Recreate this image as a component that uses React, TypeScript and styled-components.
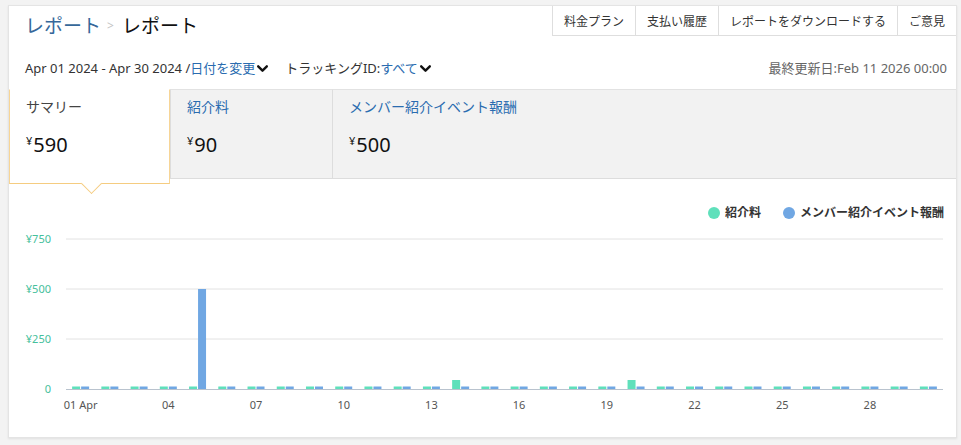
import React from 'react';
import styled, { createGlobalStyle } from 'styled-components';

const GlobalStyle = createGlobalStyle`
  html, body {
    margin: 0;
    background: #f3f3f3;
  }
  body {
    padding: 5px 4px 7px 8px;
    font-family: "Noto Sans", "Noto Sans CJK JP", sans-serif;
    color: #333;
  }
`;

const Card = styled.div`
  box-sizing: border-box;
  width: 949px;
  height: 433px;
  background: #fff;
  border: 1px solid #e4e4e4;
  box-shadow: 0 1px 2px rgba(0, 0, 0, 0.08);
  display: flex;
  flex-direction: column;
`;

const TopRow = styled.div`
  display: flex;
  justify-content: space-between;
  align-items: flex-start;
`;

const Breadcrumb = styled.div`
  display: flex;
  align-items: center;
  padding: 6px 0 0 16px;
  font-size: 19px;
  line-height: 28px;
`;

const CrumbLink = styled.span`
  color: #36689a;
`;

const CrumbSep = styled.span`
  color: #c4c4c4;
  font-size: 12px;
  margin: 0 8px 0 6px;
`;

const CrumbCurrent = styled.span`
  color: #111;
`;

const ButtonGroup = styled.div`
  display: flex;
  height: 30px;
`;

const TopButton = styled.div`
  display: flex;
  align-items: center;
  padding: 0 11px;
  font-size: 12px;
  color: #333;
  border-left: 1px solid #dedede;
  border-bottom: 1px solid #dedede;
`;

const FilterRow = styled.div`
  display: flex;
  align-items: center;
  justify-content: space-between;
  padding: 18px 9px 0 16px;
  height: 20px;
  font-size: 13px;
  line-height: 20px;
`;

const FilterGroup = styled.div`
  display: flex;
  align-items: center;
`;

const FilterText = styled.span`
  color: #333;
`;

const FilterLink = styled.span`
  color: #2a6cb0;
`;

const Caret = styled.svg`
  width: 13px;
  height: 13px;
  margin: 1px 0 0 1px;
`;

const FilterSpacer = styled.span`
  width: 16px;
`;

const Updated = styled.span`
  color: #666;
`;

const TabRow = styled.div`
  display: flex;
  align-items: flex-start;
  height: 95px;
  margin-top: 11px;
`;

const Tab = styled.div<{ $active?: boolean; $width?: number }>`
  position: relative;
  box-sizing: border-box;
  ${p => (p.$width ? `width: ${p.$width}px;` : 'flex: 1;')}
  height: ${p => (p.$active ? 95 : 90)}px;
  padding: 7px 16px 0;
  background: ${p => (p.$active ? '#fff' : '#f2f2f2')};
  border-top: 1px solid ${p => (p.$active ? '#fff' : '#e2e2e2')};
  border-left: 1px solid ${p => (p.$active ? '#f7d596' : '#dddddd')};
  border-right: ${p => (p.$active ? '1px solid #f7d596' : 'none')};
  border-bottom: 1px solid ${p => (p.$active ? '#f5cc80' : '#dddddd')};

  ${p =>
    p.$active &&
    `
    &::after {
      content: '';
      position: absolute;
      left: 74px;
      bottom: -8px;
      width: 14px;
      height: 14px;
      background: #fff;
      border-right: 1px solid #f5cc80;
      border-bottom: 1px solid #f5cc80;
      transform: rotate(45deg);
    }
  `}
`;

const TabLabel = styled.div<{ $link?: boolean }>`
  font-size: 14px;
  line-height: 20px;
  color: ${p => (p.$link ? '#2a6cb0' : '#444')};
`;

const TabValue = styled.div`
  margin-top: 10px;
  font-size: 20px;
  line-height: 28px;
  color: #111;
`;

const Yen = styled.sup`
  font-size: 11px;
  vertical-align: 7px;
  margin-right: 1px;
`;

const ChartSection = styled.div`
  flex: 1;
  display: flex;
  flex-direction: column;
`;

const Legend = styled.div`
  display: flex;
  justify-content: flex-end;
  gap: 22px;
  margin-top: 21px;
  padding-right: 12px;
  font-size: 12px;
  font-weight: 700;
  line-height: 16px;
  color: #333;
`;

const LegendItem = styled.div`
  display: flex;
  align-items: center;
  gap: 5px;
`;

const Dot = styled.span<{ $color: string }>`
  width: 12px;
  height: 12px;
  border-radius: 50%;
  background: ${p => p.$color};
`;

const ChartSvg = styled.svg`
  display: block;
  margin-top: 5px;
`;

const GREEN = '#5fe0bb';
const BLUE = '#70a7e3';

// daily values for April, [紹介料, メンバー紹介イベント報酬]
const days: [number, number][] = Array.from({ length: 30 }, (_, i) => {
  if (i === 4) return [0, 500];
  if (i === 13 || i === 19) return [45, 0];
  return [0, 0];
});

const ChevronDown = () => (
  <Caret viewBox="0 0 12 12">
    <path d="M2 4 L6 8 L10 4" fill="none" stroke="#111" strokeWidth="2.2" strokeLinecap="round" strokeLinejoin="round" />
  </Caret>
);

const BarChart: React.FC = () => {
  const width = 947;
  const height = 200;
  const left = 57;
  const right = 934;
  const base = 163;
  const scale = 0.2;
  const band = (right - left) / days.length;
  const ticks = [750, 500, 250, 0];

  const barHeight = (v: number) => Math.max(v * scale, 2.5);

  return (
    <ChartSvg width={width} height={height} viewBox={`0 0 ${width} ${height}`}>
      {ticks.map(t => {
        const y = base - t * scale;
        return (
          <g key={t}>
            {t > 0 && <line x1={left} x2={right} y1={y} y2={y} stroke="#e2e2e2" strokeWidth="1" />}
            <text
              x={42}
              y={y + 4}
              textAnchor="end"
              fontSize="11"
              fill="#45c09c"
              fontFamily="Noto Sans, sans-serif"
            >
              {t === 0 ? '0' : `¥${t}`}
            </text>
          </g>
        );
      })}
      {days.map(([g, b], i) => {
        const c = left + i * band + band / 2;
        const gh = barHeight(g);
        const bh = barHeight(b);
        return (
          <g key={i}>
            <rect x={c - 8.5} y={base - gh} width={8} height={gh} fill={GREEN} />
            <rect x={c + 0.5} y={base - bh} width={8} height={bh} fill={BLUE} />
          </g>
        );
      })}
      <line x1={left} x2={right} y1={base + 0.5} y2={base + 0.5} stroke="#b9c3ce" strokeWidth="1" />
      {days.map((_, i) =>
        i % 3 === 0 ? (
          <text
            key={i}
            x={left + i * band + band / 2}
            y={183}
            textAnchor="middle"
            fontSize="11"
            fill="#555"
            fontFamily="Noto Sans, sans-serif"
          >
            {i === 0 ? '01 Apr' : String(i + 1).padStart(2, '0')}
          </text>
        ) : null
      )}
    </ChartSvg>
  );
};

const App: React.FC = () => {
  return (
    <>
      <GlobalStyle />
      <Card>
        <TopRow>
          <Breadcrumb>
            <CrumbLink>レポート</CrumbLink>
            <CrumbSep>&gt;</CrumbSep>
            <CrumbCurrent>レポート</CrumbCurrent>
          </Breadcrumb>
          <ButtonGroup>
            <TopButton>料金プラン</TopButton>
            <TopButton>支払い履歴</TopButton>
            <TopButton>レポートをダウンロードする</TopButton>
            <TopButton>ご意見</TopButton>
          </ButtonGroup>
        </TopRow>

        <FilterRow>
          <FilterGroup>
            <FilterText>Apr 01 2024 - Apr 30 2024 /</FilterText>
            <FilterLink>日付を変更</FilterLink>
            <ChevronDown />
            <FilterSpacer />
            <FilterText>トラッキングID:</FilterText>
            <FilterLink>すべて</FilterLink>
            <ChevronDown />
          </FilterGroup>
          <Updated>最終更新日:Feb 11 2026 00:00</Updated>
        </FilterRow>

        <TabRow>
          <Tab $active $width={161}>
            <TabLabel>サマリー</TabLabel>
            <TabValue>
              <Yen>¥</Yen>590
            </TabValue>
          </Tab>
          <Tab $width={162}>
            <TabLabel $link>紹介料</TabLabel>
            <TabValue>
              <Yen>¥</Yen>90
            </TabValue>
          </Tab>
          <Tab>
            <TabLabel $link>メンバー紹介イベント報酬</TabLabel>
            <TabValue>
              <Yen>¥</Yen>500
            </TabValue>
          </Tab>
        </TabRow>

        <ChartSection>
          <Legend>
            <LegendItem>
              <Dot $color={GREEN} />
              紹介料
            </LegendItem>
            <LegendItem>
              <Dot $color={BLUE} />
              メンバー紹介イベント報酬
            </LegendItem>
          </Legend>
          <BarChart />
        </ChartSection>
      </Card>
    </>
  );
};

export default App;
